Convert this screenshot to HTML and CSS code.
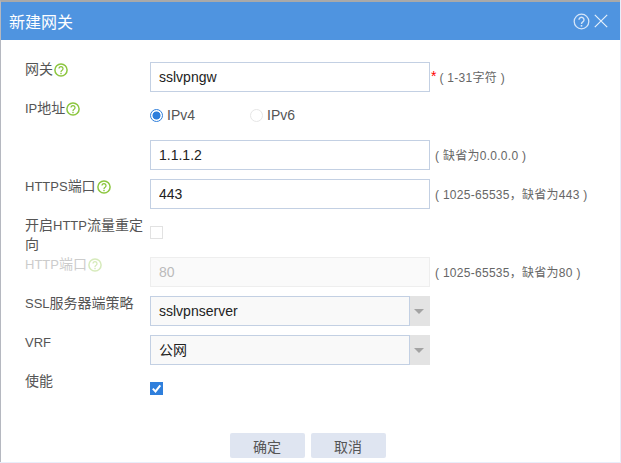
FILE: index.html
```html
<!DOCTYPE html>
<html lang="zh-CN">
<head>
    <meta charset="UTF-8">
    <title>新建网关</title>
    <link rel="stylesheet" href="styles.css">
</head>
<body>
    <svg class="defs" width="0" height="0">
        <symbol id="help" viewBox="0 0 14 14">
            <circle cx="7" cy="7" r="6.1" fill="none" stroke="currentColor" stroke-width="1.5"/>
            <path d="M5 5.6a2 2 0 1 1 3.1 1.7c-.8.5-1.1.9-1.1 1.7" fill="none" stroke="currentColor" stroke-width="1.3"/>
            <rect x="6.3" y="9.8" width="1.4" height="1.4" fill="currentColor"/>
        </symbol>
    </svg>

    <div class="dialog">
        <div class="dialog-head">
            <span class="dialog-title">新建网关</span>
            <svg class="head-icon" width="17" height="17" viewBox="0 0 17 17">
                <circle cx="8.5" cy="8.5" r="7.3" fill="none" stroke="#d5e5f8" stroke-width="1.3"/>
                <path d="M6 6.8a2.5 2.5 0 1 1 3.8 2.1c-.9.6-1.3 1-1.3 2" fill="none" stroke="#d5e5f8" stroke-width="1.4"/>
                <rect x="7.7" y="12" width="1.6" height="1.6" fill="#d5e5f8"/>
            </svg>
            <svg class="head-icon" width="14" height="14" viewBox="0 0 14 14">
                <path d="M.8.8l12.4 12.4M13.2.8L.8 13.2" stroke="#e6f0fb" stroke-width="1.2" fill="none"/>
            </svg>
        </div>

        <form class="dialog-body">
            <div class="row">
                <label class="row-label">网关<svg class="help"><use href="#help"/></svg></label>
                <input class="text-input" type="text" value="sslvpngw">
                <span class="req">*</span>
                <span class="hint hint-near">( 1-31字符 )</span>
            </div>
            <div class="row">
                <label class="row-label"><span class="latin">IP</span>地址<svg class="help"><use href="#help"/></svg></label>
                <div class="radio-group">
                    <span class="radio-item radio-v4"><i class="radio radio-on"></i>IPv4</span>
                    <span class="radio-item"><i class="radio"></i>IPv6</span>
                </div>
            </div>
            <div class="row">
                <label class="row-label"></label>
                <input class="text-input" type="text" value="1.1.1.2">
                <span class="hint">( 缺省为0.0.0.0 )</span>
            </div>
            <div class="row">
                <label class="row-label"><span class="latin">HTTPS</span>端口<svg class="help"><use href="#help"/></svg></label>
                <input class="text-input" type="text" value="443">
                <span class="hint">( 1025-65535，缺省为443 )</span>
            </div>
            <div class="row">
                <label class="row-label">开启<span class="latin">HTTP</span>流量重定<br>向</label>
                <i class="check"></i>
            </div>
            <div class="row">
                <label class="row-label is-disabled"><span class="latin">HTTP</span>端口<svg class="help"><use href="#help"/></svg></label>
                <input class="text-input" type="text" value="80" disabled>
                <span class="hint">( 1025-65535，缺省为80 )</span>
            </div>
            <div class="row">
                <label class="row-label"><span class="latin">SSL</span>服务器端策略</label>
                <div class="select">
                    <span class="select-value">sslvpnserver</span>
                    <span class="select-arrow"></span>
                </div>
            </div>
            <div class="row">
                <label class="row-label"><span class="latin">VRF</span></label>
                <div class="select">
                    <span class="select-value">公网</span>
                    <span class="select-arrow"></span>
                </div>
            </div>
            <div class="row">
                <label class="row-label">使能</label>
                <i class="check check-on">
                    <svg width="13" height="13" viewBox="0 0 13 13">
                        <path d="M2.8 6.6l2.7 2.8 4.8-6" fill="none" stroke="#fff" stroke-width="2"/>
                    </svg>
                </i>
            </div>
            <div class="buttons">
                <button type="button" class="btn">确定</button>
                <button type="button" class="btn">取消</button>
            </div>
        </form>
    </div>
</body>
</html>
```

FILE: styles.css
```css
* {
    box-sizing: border-box;
}
html, body {
    height: 100%;
}
body {
    margin: 0;
    background: #e8eefa;
    font-family: "Liberation Sans", "Noto Sans CJK SC", sans-serif;
    font-size: 14px;
    color: #555;
    overflow: hidden;
}
.defs {
    display: block;
    height: 0;
}
.dialog {
    width: 620px;
    height: 462px;
    background: #fff;
    border-top: 2px solid #a9a9a9;
    border-left: 1px solid #b5b8c0;
}
.dialog-head {
    height: 38px;
    padding: 0 12px 0 8px;
    background: #4f94e0;
    display: flex;
    align-items: center;
    color: #fff;
}
.dialog-title {
    font-size: 16px;
    flex: 1;
}
.head-icon {
    margin-left: 4px;
}
.dialog-body {
    padding: 20px 0 0 24px;
}
.row {
    height: 39px;
    display: flex;
    align-items: flex-start;
}
.row-label {
    width: 125px;
    flex: none;
    line-height: 19px;
    color: #555;
}
.latin {
    font-size: 13px;
}
.is-disabled {
    color: #ccc;
}
.is-disabled .help {
    opacity: 0.35;
}
.help {
    width: 14px;
    height: 14px;
    margin-left: 1px;
    color: #8cc63f;
    vertical-align: -3px;
}
.text-input {
    width: 280px;
    height: 30px;
    margin-top: 2px;
    padding: 0 8px;
    border: 1px solid #c3d0e3;
    font-family: inherit;
    font-size: 14px;
    color: #222;
    outline: none;
}
.text-input:disabled {
    background: #fafafa;
    border-color: #eeeeee;
    color: #bbb;
}
.req {
    margin: 7px 0 0 1px;
    color: #f00;
    line-height: 19px;
}
.hint {
    margin: 8px 0 0 5px;
    font-size: 12px;
    line-height: 20px;
    letter-spacing: 0.28px;
    color: #666;
    white-space: pre;
}
.hint-near {
    margin-left: 3px;
}
.radio-group {
    display: flex;
    margin-top: 6px;
    line-height: 20px;
}
.radio-item {
    width: 100px;
    display: flex;
    align-items: center;
}
.radio {
    width: 13px;
    height: 13px;
    margin-right: 4px;
    border: 1px solid #e6e6e6;
    border-radius: 50%;
    background: #fff;
}
.radio-on {
    border-color: #2f7fdc;
    background: radial-gradient(circle, #2f7fdc 0 3.6px, #fff 4.4px);
}
.check {
    width: 13px;
    height: 13px;
    margin-top: 10px;
    border: 1px solid #e2e2e2;
    background: #fff;
    display: block;
}
.check-on {
    margin-top: 10px;
    border: 0;
    background: #2f7fdc;
}
.check-on svg {
    display: block;
}
.select {
    width: 280px;
    height: 30px;
    margin-top: 2px;
    display: flex;
    background: #e3e3e3;
}
.select-value {
    width: 260px;
    padding: 0 8px;
    border: 1px solid #c3d0e3;
    background: #f9f9f9;
    color: #222;
    line-height: 28px;
}
.select-arrow {
    width: 0;
    height: 0;
    margin: 13px 0 0 4px;
    border-style: solid;
    border-width: 5px 5px 0;
    border-color: #a3a3a3 transparent transparent;
}
.buttons {
    display: flex;
    justify-content: center;
    gap: 6px;
    margin: -8px 0 0 -30px;
    padding-top: 30px;
}
.btn {
    width: 75px;
    height: 25px;
    padding: 0;
    border: 0;
    border-radius: 2px;
    background: #dfe5f1;
    font-family: inherit;
    font-size: 14px;
    color: #555;
}
```
